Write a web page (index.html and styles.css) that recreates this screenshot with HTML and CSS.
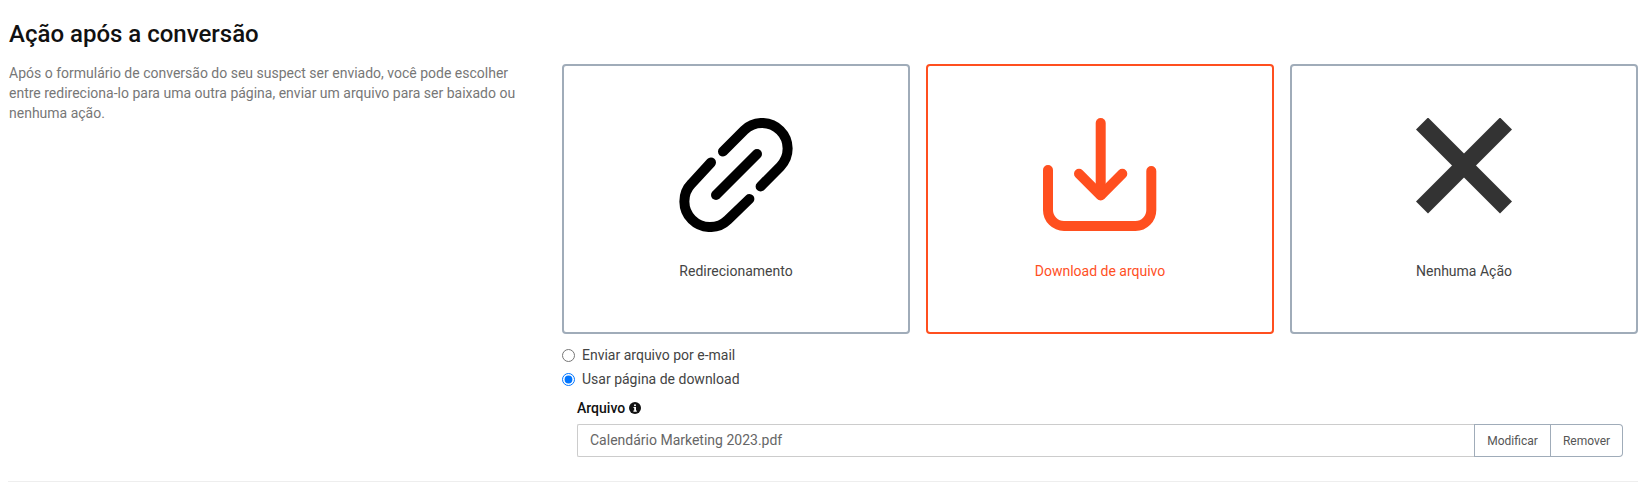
FILE: index.html
```html
<!DOCTYPE html>
<html lang="pt-BR">
<head>
  <meta charset="UTF-8">
  <meta name="viewport" content="width=device-width, initial-scale=1.0">
  <title>Ação após a conversão</title>
  <link rel="stylesheet" href="styles.css">
</head>
<body>
  <section class="section">
    <h2 class="section-title">Ação após a conversão</h2>
    <div class="section-body">
      <p class="section-help">Após o formulário de conversão do seu suspect ser enviado, você pode escolher entre redireciona-lo para uma outra página, enviar um arquivo para ser baixado ou nenhuma ação.</p>
      <div class="section-main">
        <div class="cards">
          <div class="card">
            <svg class="card-icon" width="114" height="114" viewBox="0 0 114 114" fill="none" stroke="currentColor" stroke-width="10" stroke-linecap="round">
              <path d="M44 33.6L65.2 12.2A25.6 25.6 0 0 1 101.4 48.4L81.6 68.4"/>
              <path d="M70.4 81L48.8 101.8A25.6 25.6 0 0 1 12.6 65.6L32 44.5"/>
              <path d="M37 77L78 36"/>
            </svg>
            <span class="card-label">Redirecionamento</span>
          </div>
          <div class="card card-active">
            <svg class="card-icon" width="114" height="114" viewBox="0 0 114 114" fill="none" stroke="currentColor" stroke-width="10" stroke-linecap="round" stroke-linejoin="round">
              <path d="M57.7 5V77"/>
              <path d="M36 55.7L57.7 77.5L79.3 55.7"/>
              <path d="M5 52V92A16 16 0 0 0 21 108H92.5A16 16 0 0 0 108.3 92V53"/>
            </svg>
            <span class="card-label">Download de arquivo</span>
          </div>
          <div class="card">
            <svg class="card-icon" width="114" height="114" viewBox="0 0 114 114" fill="none" stroke="#333" stroke-width="17">
              <path d="M15 5.5L99 89.5"/>
              <path d="M99 5.5L15 89.5"/>
            </svg>
            <span class="card-label">Nenhuma Ação</span>
          </div>
        </div>
        <label class="radio"><input type="radio" name="envio"> Enviar arquivo por e-mail</label>
        <label class="radio"><input type="radio" name="envio" checked> Usar página de download</label>
        <div class="file-field">
          <div class="file-label">Arquivo
            <svg class="info-icon" width="12" height="12" viewBox="0 0 12 12">
              <circle cx="6" cy="6" r="6" fill="#111"/>
              <rect x="5" y="2.2" width="2" height="2" rx="1" fill="#fff"/>
              <path d="M4.5 5H7V8.6H7.8V9.7H4.4V8.6H5.2V6.1H4.5Z" fill="#fff"/>
            </svg>
          </div>
          <div class="file-group">
            <div class="file-name">Calendário Marketing 2023.pdf</div>
            <button class="file-btn" type="button">Modificar</button>
            <button class="file-btn" type="button">Remover</button>
          </div>
        </div>
      </div>
    </div>
  </section>
</body>
</html>
```

FILE: styles.css
```css
/* Basic reset */
* { margin: 0; padding: 0; box-sizing: border-box; }
html, body { height: 100%; background: #fff; overflow: hidden; }
body { font-family: Roboto, "Liberation Sans", sans-serif; color: #333; font-size: 14px; }

.section {
  margin: 0 13px 0 8px;
  padding: 21px 0 24px;
  height: 482px;
  border-bottom: 1px solid #eee;
}
.section-title { font-size: 24px; font-weight: 500; line-height: 26px; color: #111; padding-left: 1px; }
.section-body { display: grid; grid-template-columns: 554px 1fr; margin-top: 17px; }
.section-help { width: 530px; margin-top: -1px; padding-left: 1px; line-height: 20px; color: #777; }

/* Option cards */
.cards { display: grid; grid-template-columns: repeat(3, 1fr); gap: 16px; margin-bottom: 9px; }
.card {
  height: 270px;
  padding-top: 52px;
  display: flex;
  flex-direction: column;
  align-items: center;
  border: 2px solid #a0acb9;
  border-radius: 4px;
  color: #000;
}
.card-icon { display: block; }
.card-label { margin-top: 29px; line-height: 20px; color: #444; }
.card-active { border-color: #ff4f1f; color: #ff4f1f; }
.card-active .card-label { color: #ff4f1f; }

/* Radios */
.radio { display: flex; align-items: center; gap: 7px; height: 24px; color: #444; }
.radio input { width: 13px; height: 13px; margin: 0; }

/* File upload */
.file-field { margin: 7px 0 0 15px; }
.file-label { display: flex; align-items: center; gap: 4px; font-weight: 500; line-height: 20px; color: #111; margin-bottom: 6px; }
.file-group { display: flex; height: 33px; margin-right: 15px; }
.file-name {
  flex: 1;
  padding: 0 12px;
  line-height: 30px;
  border: 1px solid #ccc;
  border-right: 0;
  border-radius: 2px 0 0 2px;
  color: #666;
}
.file-btn {
  width: 77px;
  font: 12px Roboto, "Liberation Sans", sans-serif;
  color: #555;
  background: #fff;
  border: 1px solid #a0acb9;
}
.file-btn:last-child { width: 72px; border-left: 0; border-radius: 0 4px 4px 0; }
```
